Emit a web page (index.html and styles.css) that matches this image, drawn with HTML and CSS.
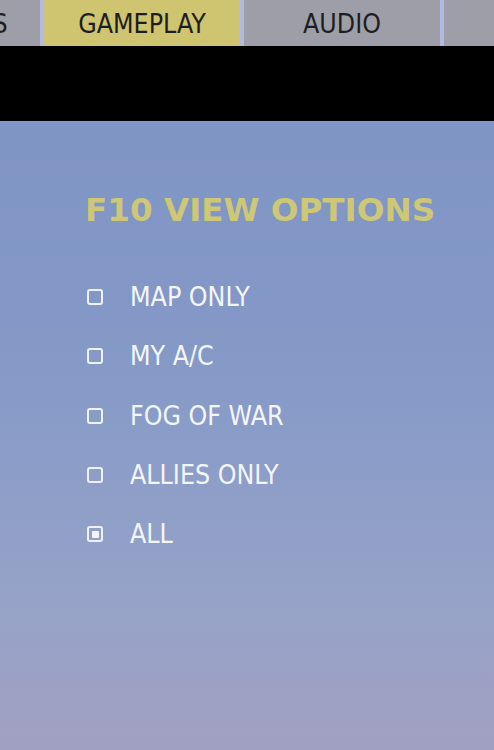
FILE: index.html
```html
<!DOCTYPE html>
<html>
<head>
<meta charset="utf-8">
<link rel="stylesheet" href="styles.css">
</head>
<body>
<div class="screen">
  <div class="tabs">
    <div class="tab">CONTROLS</div>
    <div class="tab active">GAMEPLAY</div>
    <div class="tab">AUDIO</div>
    <div class="tab"></div>
  </div>
  <div class="blackbar"></div>
  <div class="content">
    <div class="title">F10 VIEW OPTIONS</div>
    <div class="options">
      <div class="option"><span class="box"></span><span class="label">MAP ONLY</span></div>
      <div class="option"><span class="box"></span><span class="label">MY A/C</span></div>
      <div class="option"><span class="box"></span><span class="label">FOG OF WAR</span></div>
      <div class="option"><span class="box"></span><span class="label">ALLIES ONLY</span></div>
      <div class="option"><span class="box checked"></span><span class="label">ALL</span></div>
    </div>
  </div>
</div>
</body>
</html>
```

FILE: styles.css
```css
html, body {
  margin: 0;
  padding: 0;
  width: 494px;
  height: 750px;
  overflow: hidden;
}

.screen {
  width: 494px;
  height: 750px;
  display: flex;
  flex-direction: column;
  font-family: "DejaVu Sans Condensed", "DejaVu Sans", sans-serif;
  font-stretch: condensed;
}

.tabs {
  flex: 0 0 46px;
  display: flex;
  gap: 4px;
  margin-left: -156px;
  background: #b3bbe4;
}

.tab {
  flex: 0 0 196px;
  display: flex;
  align-items: center;
  justify-content: center;
  background: #9d9ea7;
  color: #1e1e22;
  font-size: 26.5px;
  line-height: 30px;
  padding-top: 1px;
}

.tab.active {
  background: #cfc46f;
}

.blackbar {
  flex: 0 0 75px;
  background: #000;
  border-bottom: 1px solid #8d95b9;
}

.content {
  flex: 1;
  padding: 70px 0 0 85px;
  background: linear-gradient(to bottom, #7f95c4 0%, #8398c6 30%, #8c9dc8 55%, #97a3c7 78%, #a1a0c2 100%);
}

.title {
  font-family: "DejaVu Sans", sans-serif;
  font-stretch: normal;
  font-weight: bold;
  font-size: 32.6px;
  line-height: 36px;
  color: #cdc776;
}

.options {
  margin-top: 54px;
  display: flex;
  flex-direction: column;
  gap: 29.25px;
}

.option {
  display: flex;
  align-items: center;
  height: 30px;
}

.box {
  flex: 0 0 auto;
  width: 16px;
  height: 16px;
  box-sizing: border-box;
  border: 2px solid #eef1f8;
  border-radius: 3px;
  margin-left: 2px;
  margin-right: 27px;
  display: flex;
  align-items: center;
  justify-content: center;
}

.box.checked::after {
  content: "";
  width: 7px;
  height: 7px;
  background: #f4f5fa;
  border-radius: 1px;
}

.label {
  color: #f3f5fb;
  font-size: 26.5px;
  line-height: 30px;
}
```
